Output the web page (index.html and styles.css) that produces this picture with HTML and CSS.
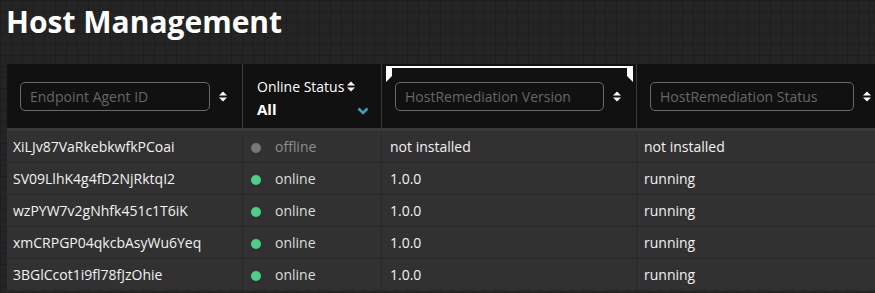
FILE: index.html
```html
<!DOCTYPE html>
<html lang="en">
<head>
  <meta charset="UTF-8">
  <title>Host Management</title>
  <link rel="stylesheet" href="styles.css">
</head>
<body>

  <div class="page">
    <h1 class="title">Host Management</h1>

    <table class="hosts">
      <colgroup>
        <col class="col-id">
        <col class="col-status">
        <col class="col-version">
        <col class="col-remed">
      </colgroup>
      <thead>
        <tr>
          <th>
            <div class="filter">
              <input type="text" placeholder="Endpoint Agent ID">
              <svg class="sort" width="8" height="11" viewBox="0 0 8 11"><path d="M0 4.6 L4 0.4 L8 4.6 Z M0 6.4 L8 6.4 L4 10.6 Z" fill="#fff"/></svg>
            </div>
          </th>
          <th class="status-head">
            <div class="status-label">Online Status
              <svg class="sort" width="8" height="11" viewBox="0 0 8 11"><path d="M0 4.6 L4 0.4 L8 4.6 Z M0 6.4 L8 6.4 L4 10.6 Z" fill="#fff"/></svg>
            </div>
            <div class="status-select">
              <span>All</span>
              <svg width="12" height="8" viewBox="0 0 12 8"><path d="M1.5 1.5 L6 6 L10.5 1.5" fill="none" stroke="#3aa3b1" stroke-width="2.6"/></svg>
            </div>
          </th>
          <th class="drag-head">
            <svg class="drag-mark" width="247" height="16" viewBox="0 0 247 16"><path d="M0 0 H247 V16 L241 10 V2 H6 V10 L0 16 Z" fill="#fff"/></svg>
            <div class="filter">
              <input type="text" placeholder="HostRemediation Version">
              <svg class="sort" width="8" height="11" viewBox="0 0 8 11"><path d="M0 4.6 L4 0.4 L8 4.6 Z M0 6.4 L8 6.4 L4 10.6 Z" fill="#fff"/></svg>
            </div>
          </th>
          <th>
            <div class="filter">
              <input type="text" placeholder="HostRemediation Status">
              <svg class="sort" width="8" height="11" viewBox="0 0 8 11"><path d="M0 4.6 L4 0.4 L8 4.6 Z M0 6.4 L8 6.4 L4 10.6 Z" fill="#fff"/></svg>
            </div>
          </th>
        </tr>
      </thead>
      <tbody>
        <tr>
          <td>XiLJv87VaRkebkwfkPCoai</td>
          <td><span class="dot off"></span><span class="state off">offline</span></td>
          <td>not installed</td>
          <td>not installed</td>
        </tr>
        <tr>
          <td>SV09LlhK4g4fD2NjRktqI2</td>
          <td><span class="dot"></span><span class="state">online</span></td>
          <td>1.0.0</td>
          <td>running</td>
        </tr>
        <tr>
          <td>wzPYW7v2gNhfk451c1T6iK</td>
          <td><span class="dot"></span><span class="state">online</span></td>
          <td>1.0.0</td>
          <td>running</td>
        </tr>
        <tr>
          <td>xmCRPGP04qkcbAsyWu6Yeq</td>
          <td><span class="dot"></span><span class="state">online</span></td>
          <td>1.0.0</td>
          <td>running</td>
        </tr>
        <tr>
          <td>3BGlCcot1i9fl78fJzOhie</td>
          <td><span class="dot"></span><span class="state">online</span></td>
          <td>1.0.0</td>
          <td>running</td>
        </tr>
      </tbody>
    </table>
  </div>

</body>
</html>
```

FILE: styles.css
```css
html, body {
  margin: 0;
  height: 100%;
  overflow: hidden;
}

body {
  background-color: #242424;
  background-image:
    linear-gradient(to right, #1e1e1e 1px, transparent 1px),
    linear-gradient(to bottom, #1e1e1e 1px, transparent 1px);
  background-size: 11px 11px;
  color: #f0f0f0;
  font-family: "Open Sans", "DejaVu Sans", sans-serif;
  font-size: 14px;
}

.page {
  padding: 0 0 0 7px;
}

.title {
  margin: 4px 0 24px -1px;
  font-size: 30px;
  line-height: 36px;
  font-weight: 700;
  color: #fff;
}

.hosts {
  border-collapse: separate;
  border-spacing: 0;
  table-layout: fixed;
  width: 880px;
}

.col-id { width: 236px; }
.col-status { width: 139px; }
.col-version { width: 255px; }
.col-remed { width: 250px; }

.hosts th {
  background-color: #111;
  height: 67px;
  padding: 0;
  box-sizing: border-box;
  border-right: 1px solid #3a3a3a;
  border-bottom: 3px solid #383838;
  text-align: left;
  font-weight: 400;
  vertical-align: middle;
}

.hosts th:first-child {
  border-right-color: #404040;
}

.filter {
  display: flex;
  align-items: center;
  gap: 9px;
  padding: 0 15px 0 13px;
}

.filter input {
  flex: 1;
  min-width: 0;
  height: 29px;
  box-sizing: border-box;
  background: transparent;
  border: 1px solid #6a6a6a;
  border-radius: 5px;
  padding: 0 9px;
  font-family: inherit;
  font-size: 14px;
  color: #ddd;
}

.filter input::placeholder {
  color: #666;
}

.sort {
  flex: none;
  display: block;
}

.hosts th.status-head {
  padding: 4px 12px 0 14px;
}

.status-label {
  display: flex;
  align-items: center;
  gap: 3px;
  color: #fff;
  font-size: 14px;
  line-height: 20px;
}

.status-select {
  display: flex;
  justify-content: space-between;
  align-items: center;
  margin-top: 1px;
  font-size: 15px;
  font-weight: 700;
  color: #fff;
  line-height: 22px;
}

.status-select svg {
  margin-top: 5px;
}

.drag-head {
  position: relative;
}

.drag-mark {
  position: absolute;
  left: 4px;
  top: 2px;
}

.hosts td {
  background-color: #313131;
  height: 31px;
  padding: 0 7px;
  border-right: 1px solid #292929;
  border-bottom: 1px solid #292929;
  white-space: nowrap;
  overflow: hidden;
  color: #f2f2f2;
}

.hosts td:first-child {
  padding-left: 6px;
}

.hosts td:nth-child(2) {
  padding-left: 8px;
}

.hosts td:nth-child(3) {
  padding-left: 8px;
}

.dot {
  display: inline-block;
  width: 10px;
  height: 10px;
  border-radius: 50%;
  background-color: #4ccf88;
  margin-right: 14px;
  vertical-align: -1px;
}

.dot.off {
  background-color: #777;
}

.state {
  color: #ddd;
}

.state.off {
  color: #8e8e8e;
}
```
